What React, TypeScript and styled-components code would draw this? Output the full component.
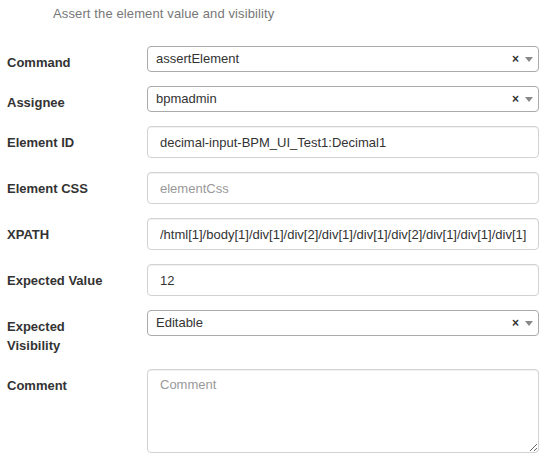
import React from 'react';
import styled, { createGlobalStyle } from 'styled-components';

const GlobalStyle = createGlobalStyle`
    html, body {
        margin: 0;
        padding: 0;
        background: #ffffff;
        font-family: "Liberation Sans", Arial, sans-serif;
        font-size: 13px;
        color: #333333;
    }
`;

const Page = styled.div`
    width: 550px;
    height: 470px;
    box-sizing: border-box;
    padding: 6px 11px 0 7px;
    overflow: hidden;
`;

const Description = styled.p`
    margin: 0 0 24px 46px;
    line-height: 16px;
    color: #777777;
    font-size: 13px;
    letter-spacing: 0.12px;
`;

const Row = styled.div`
    display: flex;
    align-items: flex-start;
    margin-bottom: 14px;
`;

const Label = styled.label`
    flex: 0 0 140px;
    padding-top: 7px;
    padding-right: 32px;
    box-sizing: border-box;
    font-weight: bold;
    line-height: 19px;
    color: #333333;
`;

const Field = styled.div`
    flex: 1;
    min-width: 0;
`;

const TextInput = styled.input`
    display: block;
    width: 100%;
    height: 32px;
    box-sizing: border-box;
    padding: 0 12px;
    border: 1px solid #d2d2d2;
    border-radius: 4px;
    box-shadow: inset 0 1px 1px rgba(0, 0, 0, 0.06);
    font-family: inherit;
    font-size: 13px;
    color: #333333;
    background: #ffffff;
    outline: none;

    &::placeholder {
        color: #999999;
    }
`;

const TextArea = styled.textarea`
    display: block;
    width: 100%;
    height: 84px;
    box-sizing: border-box;
    padding: 6px 12px;
    border: 1px solid #d2d2d2;
    border-radius: 4px;
    box-shadow: inset 0 1px 1px rgba(0, 0, 0, 0.06);
    font-family: inherit;
    font-size: 13px;
    line-height: 18px;
    color: #333333;
    resize: vertical;
    outline: none;

    &::placeholder {
        color: #999999;
    }
`;

const SelectBox = styled.div`
    display: flex;
    align-items: center;
    height: 26px;
    box-sizing: border-box;
    padding: 0 5px 0 8px;
    border: 1px solid #aaaaaa;
    border-radius: 4px;
    background: #ffffff;
    color: #333333;
    line-height: 24px;
`;

const SelectValue = styled.span`
    flex: 1;
    overflow: hidden;
    white-space: nowrap;
    text-overflow: ellipsis;
`;

const Clear = styled.span`
    width: 8px;
    margin-right: 5px;
    font-size: 12px;
    font-weight: bold;
    line-height: 12px;
    color: #333333;
`;

const Arrow = styled.span`
    width: 0;
    height: 0;
    border-left: 4px solid transparent;
    border-right: 4px solid transparent;
    border-top: 5px solid #888888;
`;

const Select = ({ value }: { value: string }) => (
    <SelectBox>
        <SelectValue>{value}</SelectValue>
        <Clear>×</Clear>
        <Arrow />
    </SelectBox>
);

const App = () => {
    return (
        <React.Fragment>
            <GlobalStyle />
            <Page>
                <Description>Assert the element value and visibility</Description>
                <Row>
                    <Label>Command</Label>
                    <Field><Select value="assertElement" /></Field>
                </Row>
                <Row>
                    <Label>Assignee</Label>
                    <Field><Select value="bpmadmin" /></Field>
                </Row>
                <Row>
                    <Label>Element ID</Label>
                    <Field><TextInput defaultValue="decimal-input-BPM_UI_Test1:Decimal1" /></Field>
                </Row>
                <Row>
                    <Label>Element CSS</Label>
                    <Field><TextInput placeholder="elementCss" /></Field>
                </Row>
                <Row>
                    <Label>XPATH</Label>
                    <Field>
                        <TextInput defaultValue="/html[1]/body[1]/div[1]/div[2]/div[1]/div[1]/div[2]/div[1]/div[1]/div[1]/div[1]/div[1]/input[1]" />
                    </Field>
                </Row>
                <Row>
                    <Label>Expected Value</Label>
                    <Field><TextInput defaultValue="12" /></Field>
                </Row>
                <Row>
                    <Label>Expected Visibility</Label>
                    <Field><Select value="Editable" /></Field>
                </Row>
                <Row>
                    <Label>Comment</Label>
                    <Field><TextArea placeholder="Comment" /></Field>
                </Row>
            </Page>
        </React.Fragment>
    );
};

export default App;
